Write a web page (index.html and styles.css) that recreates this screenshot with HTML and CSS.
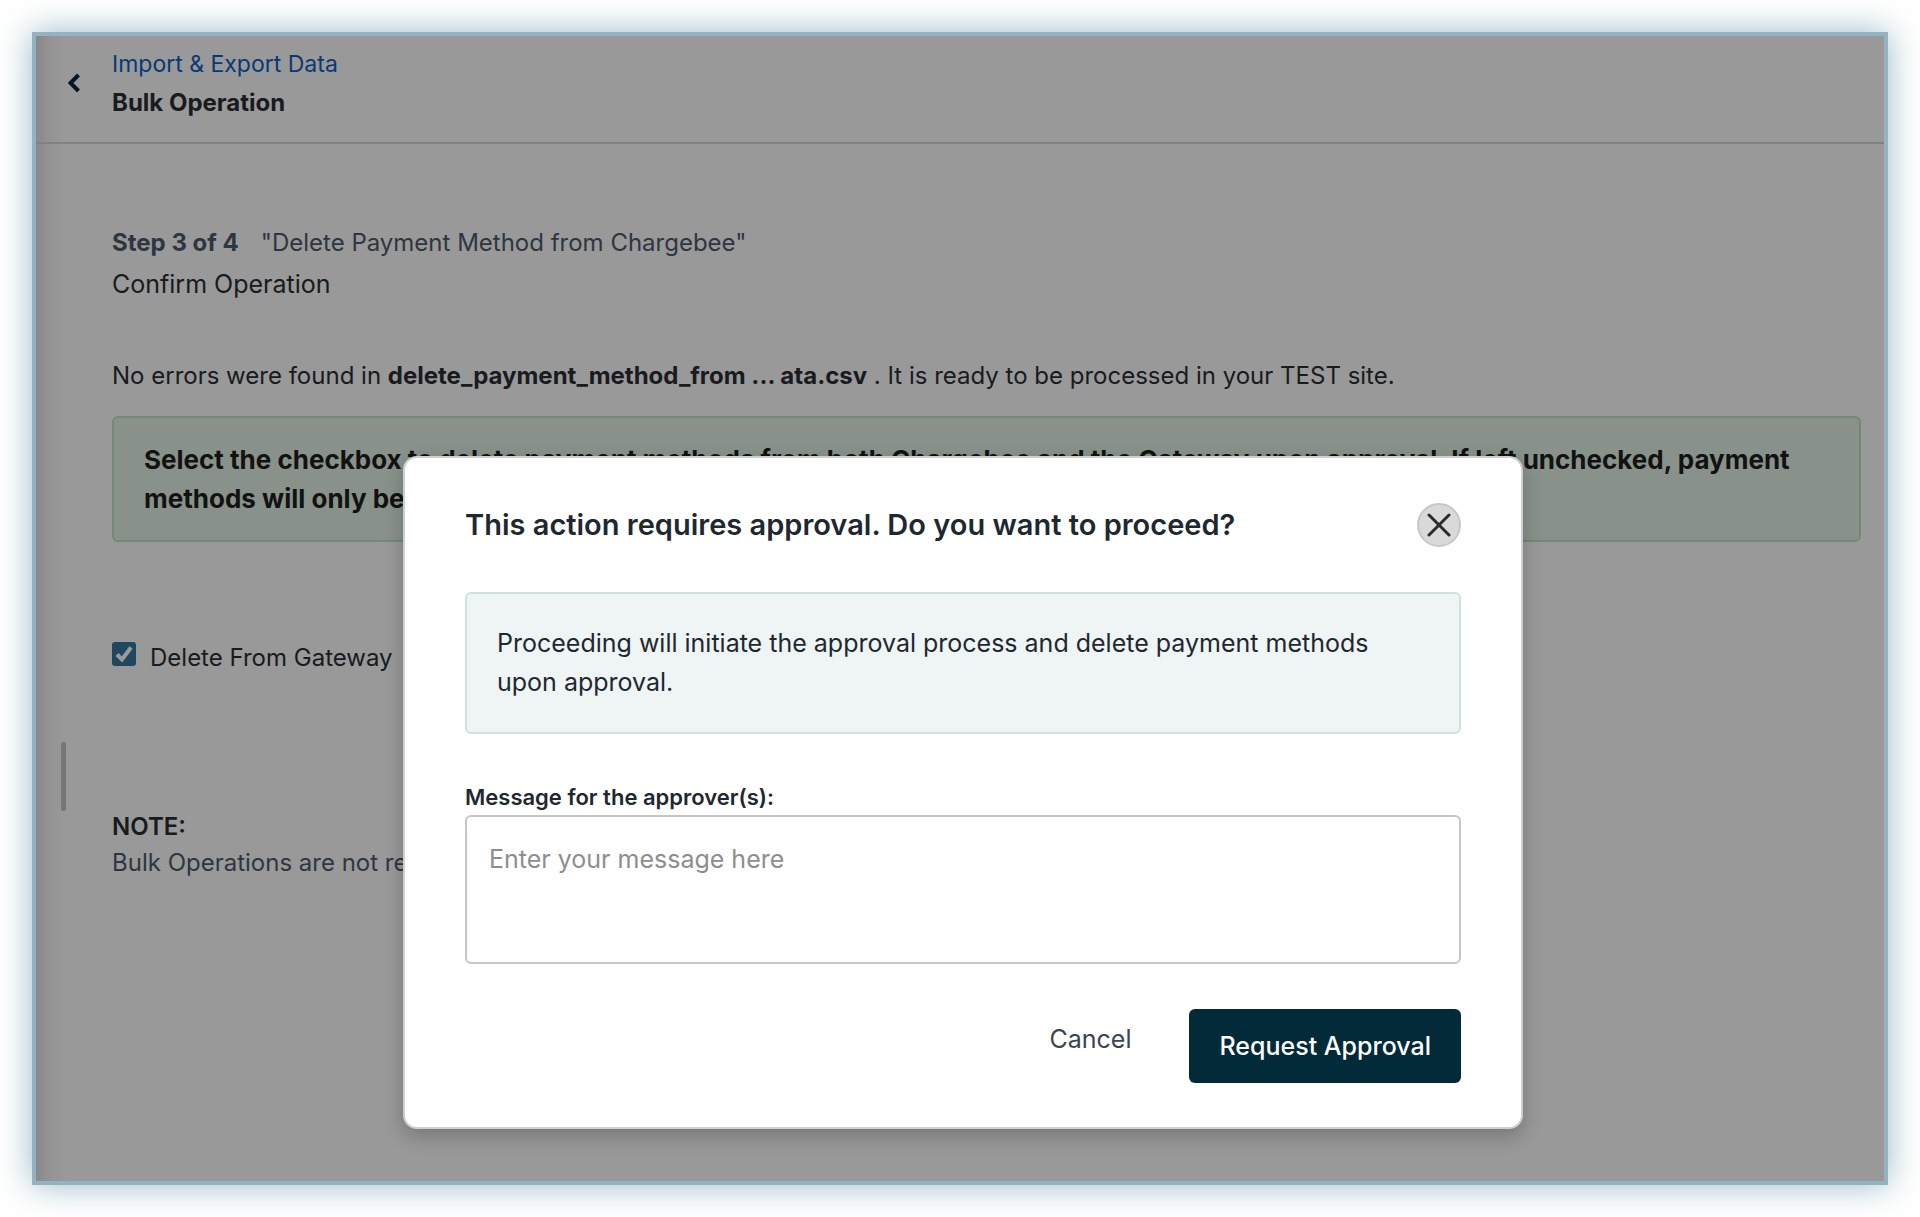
FILE: index.html
```html
<!DOCTYPE html>
<html lang="en">
<head>
    <meta charset="UTF-8">
    <meta name="viewport" content="width=device-width, initial-scale=1.0">
    <title>Bulk Operation</title>
    <link rel="stylesheet" href="styles.css">
</head>
<body>
<div class="frame">
    <header class="page-header">
        <a class="back" href="#" aria-label="Back">
            <svg width="12" height="20" viewBox="0 0 12 20" fill="none" stroke="#002a3a" stroke-width="4">
                <path d="M10.5 2 L2.5 10 L10.5 18"/>
            </svg>
        </a>
        <div>
            <a class="crumb" href="#">Import &amp; Export Data</a>
            <h1>Bulk Operation</h1>
        </div>
    </header>

    <main class="content">
        <p class="step"><strong>Step 3 of 4</strong><span>"Delete Payment Method from Chargebee"</span></p>
        <h2>Confirm Operation</h2>
        <p class="result">No errors were found in <strong>delete_payment_method_from ... ata.csv</strong> . It is ready to be processed in your TEST site.</p>
        <div class="notice">Select the checkbox to delete payment methods from both Chargebee and the Gateway upon approval. If left unchecked, payment methods will only be deleted from Chargebee.</div>
        <div class="option">
            <input type="checkbox" id="delete-gateway" checked>
            <label for="delete-gateway">Delete From Gateway</label>
        </div>
        <h3>NOTE:</h3>
        <p class="note">Bulk Operations are not reversible.</p>
    </main>

    <div class="drag-handle"></div>

    <div class="overlay">
        <div class="modal" role="dialog" aria-modal="true" aria-labelledby="modal-title">
            <div class="modal-header">
                <h2 id="modal-title">This action requires approval. Do you want to proceed?</h2>
                <button type="button" class="close" aria-label="Close">
                    <svg width="24" height="24" viewBox="0 0 24 24" stroke="#2b2b2b" stroke-width="3" stroke-linecap="round">
                        <path d="M2 2 L22 22 M22 2 L2 22"/>
                    </svg>
                </button>
            </div>
            <p class="info">Proceeding will initiate the approval process and delete payment methods upon approval.</p>
            <label class="message-label" for="message">Message for the approver(s):</label>
            <textarea id="message" placeholder="Enter your message here"></textarea>
            <div class="actions">
                <button type="button" class="cancel">Cancel</button>
                <button type="button" class="request">Request Approval</button>
            </div>
        </div>
    </div>
</div>
</body>
</html>
```

FILE: styles.css
```css
* {
    box-sizing: border-box;
}
body {
    margin: 0;
    padding: 32px;
    min-height: 100vh;
    display: flex;
    background-color: #fff;
    font-family: Inter, "Liberation Sans", sans-serif;
    font-size: 24px;
    color: #2b2f35;
}
h1, h2, h3, p {
    margin: 0;
}
button, textarea {
    font-family: inherit;
    font-size: 25px;
}
.frame {
    position: relative;
    flex: 1;
    border: 4px solid #93b3c3;
    box-shadow: 0 0 32px rgba(70, 125, 150, 0.55);
    background: linear-gradient(to right, #e4e4e6, #f5f5f6 12px, #fff 30px);
}

/* page behind the dialog */
.page-header {
    display: flex;
    align-items: center;
    padding: 8px 24px 20px 32px;
    border-bottom: 2px solid #d3d9e0;
}
.back {
    display: flex;
    width: 44px;
}
.crumb {
    display: block;
    font-size: 23px;
    line-height: 40px;
    color: #0f5fc2;
    text-decoration: none;
}
h1 {
    font-size: 24px;
    font-weight: 700;
    line-height: 38px;
}
.content {
    padding: 79px 23px 24px 76px;
}
.step {
    line-height: 40px;
    color: #4e5b6c;
}
.step span {
    margin-left: 22px;
}
.content h2 {
    font-size: 25px;
    font-weight: 400;
    line-height: 42px;
    margin-bottom: 51px;
}
.result {
    line-height: 40px;
    margin-bottom: 20px;
}
strong {
    font-weight: 700;
}
.notice {
    padding: 22px 30px;
    border: 2px solid #bce6c0;
    border-radius: 6px;
    background-color: #e3f3e6;
    color: #1e1e1e;
    font-size: 26px;
    font-weight: 700;
    line-height: 39px;
}
.option {
    display: flex;
    align-items: center;
    gap: 14px;
    margin: 98px 0 133px;
    line-height: 36px;
}
.option input {
    appearance: none;
    width: 24px;
    height: 24px;
    margin: 0 0 8px;
    border-radius: 3px;
    background: #34799f url("data:image/svg+xml,%3Csvg xmlns='http://www.w3.org/2000/svg' viewBox='0 0 24 24' fill='none' stroke='white' stroke-width='4'%3E%3Cpath d='M5 12.5 L10 17.5 L19 5.5'/%3E%3C/svg%3E");
}
.content h3 {
    font-size: 24px;
    font-weight: 600;
    line-height: 36px;
}
.note {
    line-height: 36px;
    color: #4e5b6c;
}
.drag-handle {
    position: absolute;
    top: 706px;
    left: 25px;
    width: 5px;
    height: 69px;
    border-radius: 3px;
    background-color: #c4c5cc;
}

/* dialog */
.overlay {
    position: absolute;
    inset: 0;
    display: flex;
    justify-content: center;
    align-items: flex-start;
    padding: 420px 0 24px 6px;
    background-color: rgba(0, 0, 0, 0.4);
}
.modal {
    width: 100%;
    max-width: 1120px;
    padding: 43px 60px 44px;
    border: 2px solid #cfcfcf;
    border-radius: 14px;
    background-color: #fff;
    box-shadow: 0 8px 20px rgba(0, 0, 0, 0.22);
    color: #1f2830;
}
.modal-header {
    display: flex;
    justify-content: space-between;
    align-items: center;
    margin-bottom: 43px;
}
.modal-header h2 {
    font-size: 29px;
    font-weight: 600;
    line-height: 48px;
}
.close {
    display: flex;
    align-items: center;
    justify-content: center;
    width: 44px;
    height: 44px;
    padding: 0;
    border: 2px solid #c8c8c8;
    border-radius: 50%;
    background-color: #d9d9d9;
    cursor: pointer;
}
.info {
    padding: 30px;
    border: 2px solid #cfe1e4;
    border-radius: 6px;
    background-color: #eff4f5;
    font-size: 25px;
    line-height: 39px;
    margin-bottom: 45px;
}
.message-label {
    display: block;
    font-size: 22px;
    font-weight: 600;
    line-height: 36px;
}
textarea {
    display: block;
    width: 100%;
    height: 149px;
    padding: 24px 22px;
    border: 2px solid #c5c5cf;
    border-radius: 6px;
    line-height: 36px;
    resize: none;
}
textarea::placeholder {
    color: #8e8e8e;
}
.actions {
    display: flex;
    justify-content: flex-end;
    align-items: flex-start;
    gap: 28px;
    margin-top: 45px;
}
.actions button {
    padding: 0 30px;
    border: none;
    border-radius: 6px;
    cursor: pointer;
}
.cancel {
    height: 60px;
    background: none;
    color: #3b4450;
}
.request {
    height: 74px;
    background-color: #032a39;
    color: #fff;
    font-weight: 500;
}
```
